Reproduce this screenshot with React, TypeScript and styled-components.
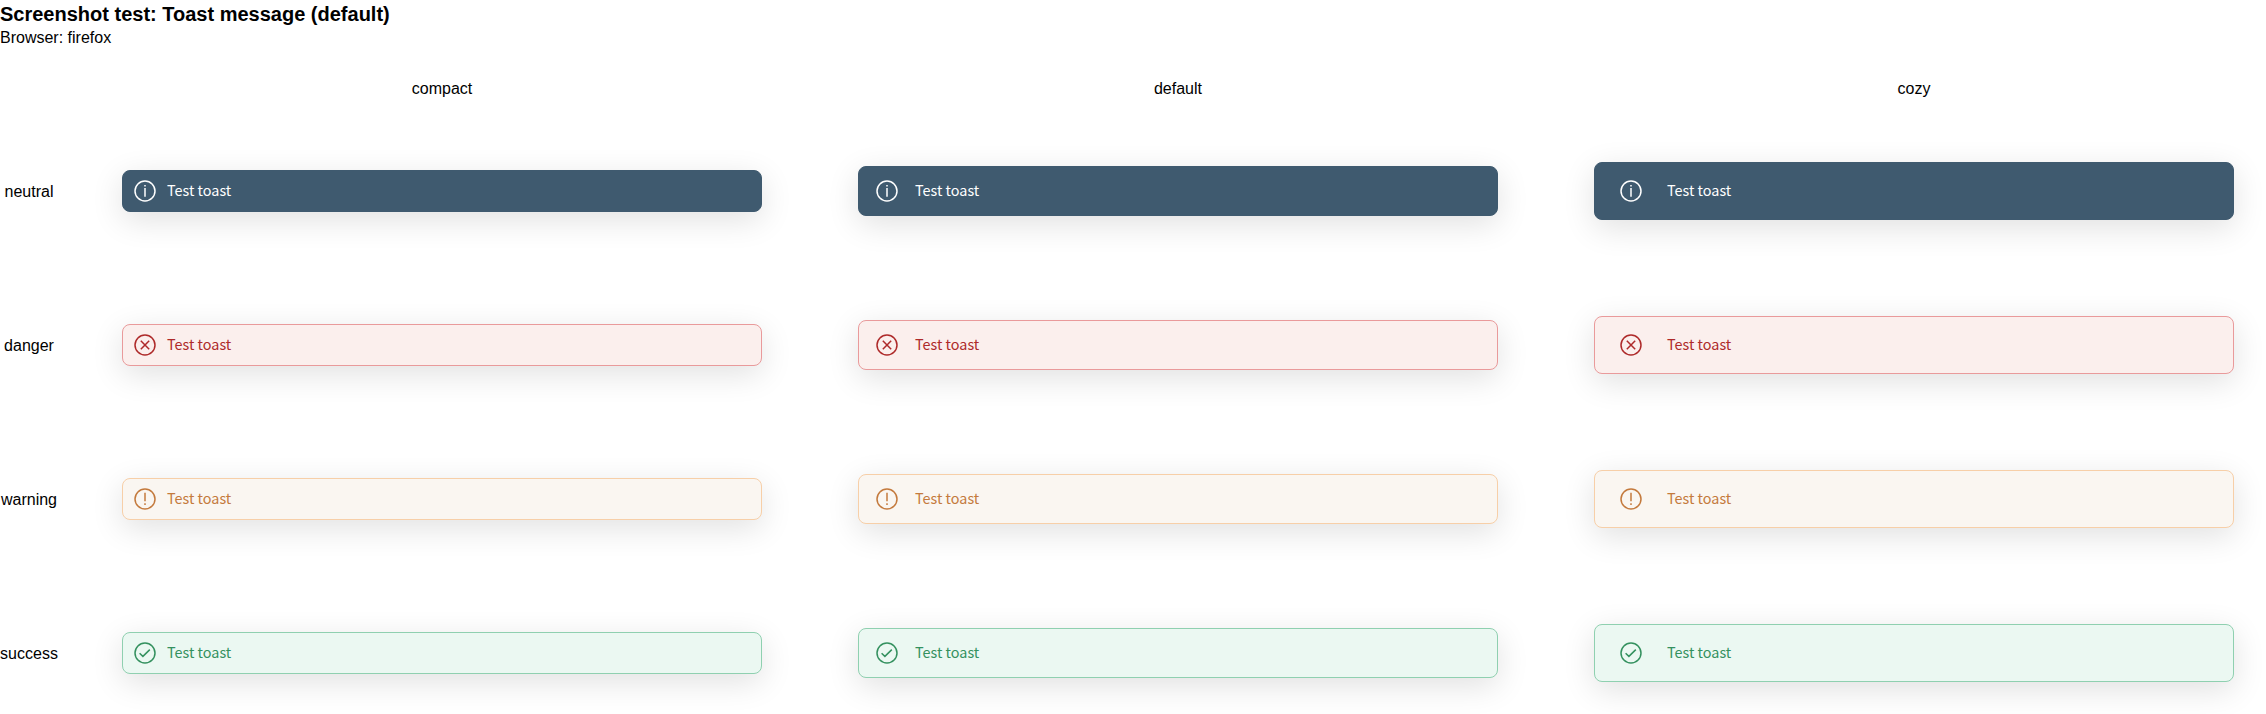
import React from "react";
import styled, { createGlobalStyle } from "styled-components";

const GlobalStyle = createGlobalStyle`
  body {
    margin: 0;
    background: #fff;
    color: #000;
    font: 16px/18px "Liberation Sans", Arial, sans-serif;
  }
`;

const Title = styled.h1`
  margin: 0;
  padding-top: 3px;
  font-size: 20px;
  line-height: 23px;
  font-weight: 700;
`;

const Browser = styled.div`
  height: 54px;
  padding-top: 3px;
  box-sizing: border-box;
`;

const Grid = styled.div`
  display: grid;
  grid-template-columns: 58px repeat(3, 704px);
  grid-template-rows: 18px repeat(4, 122px);
  gap: 32px;
  align-items: center;
  justify-items: center;
`;

const ColumnLabel = styled.div`
  white-space: nowrap;
`;

const RowLabel = styled.div`
  padding-top: 1px;
  white-space: nowrap;
`;

type Variant = "neutral" | "danger" | "warning" | "success";
type Density = "compact" | "default" | "cozy";

const palette: Record<Variant, { bg: string; border: string; text: string }> = {
  neutral: { bg: "#3f5a6f", border: "#3f5a6f", text: "#ffffff" },
  danger: { bg: "#fbefed", border: "#e99a9b", text: "#ae2a2a" },
  warning: { bg: "#faf6f1", border: "#f7cfa8", text: "#c47a3d" },
  success: { bg: "#ebf8f2", border: "#8fd0b0", text: "#34915f" },
};

const spacing: Record<Density, { y: number; x: number }> = {
  compact: { y: 8, x: 10 },
  default: { y: 12, x: 16 },
  cozy: { y: 16, x: 24 },
};

const ToastBox = styled.div<{ $variant: Variant; $density: Density }>`
  box-sizing: border-box;
  width: 640px;
  display: flex;
  align-items: center;
  gap: ${(p) => spacing[p.$density].x}px;
  padding: ${(p) => spacing[p.$density].y}px ${(p) => spacing[p.$density].x}px;
  border: 1px solid ${(p) => palette[p.$variant].border};
  border-radius: 8px;
  background: ${(p) => palette[p.$variant].bg};
  color: ${(p) => palette[p.$variant].text};
  box-shadow: 0 8px 32px rgba(0, 0, 0, 0.12);
`;

const ToastText = styled.span`
  height: 24px;
  font: 14.4px/22px "Noto Sans CJK SC", sans-serif;
`;

const IconSvg = styled.svg`
  display: block;
  flex: none;
  width: 24px;
  height: 24px;
  fill: none;
  stroke: currentColor;
  stroke-width: 1.5;
`;

const glyphs: Record<Variant, React.ReactNode> = {
  neutral: (
    <>
      <path d="M12 9v8.7" />
      <path d="M12 6v1.4" />
    </>
  ),
  danger: <path d="M7.8 7.8l8.4 8.4M16.2 7.8l-8.4 8.4" />,
  warning: (
    <>
      <path d="M12 5.8v8.5" />
      <path d="M12 16.2v1.7" />
    </>
  ),
  success: <path d="M6.6 12.2l3.3 3.2 6.9-6.8" />,
};

function Toast({ variant, density }: { variant: Variant; density: Density }) {
  return (
    <ToastBox $variant={variant} $density={density}>
      <IconSvg viewBox="0 0 24 24">
        <circle cx="12" cy="12" r="10" />
        {glyphs[variant]}
      </IconSvg>
      <ToastText>Test toast</ToastText>
    </ToastBox>
  );
}

const variants: Variant[] = ["neutral", "danger", "warning", "success"];
const densities: Density[] = ["compact", "default", "cozy"];

export default function App() {
  return (
    <>
      <GlobalStyle />
      <Title>Screenshot test: Toast message (default)</Title>
      <Browser>Browser: firefox</Browser>
      <Grid>
        <span />
        {densities.map((d) => (
          <ColumnLabel key={d}>{d}</ColumnLabel>
        ))}
        {variants.map((v) => (
          <React.Fragment key={v}>
            <RowLabel>{v}</RowLabel>
            {densities.map((d) => (
              <Toast key={d} variant={v} density={d} />
            ))}
          </React.Fragment>
        ))}
      </Grid>
    </>
  );
}
